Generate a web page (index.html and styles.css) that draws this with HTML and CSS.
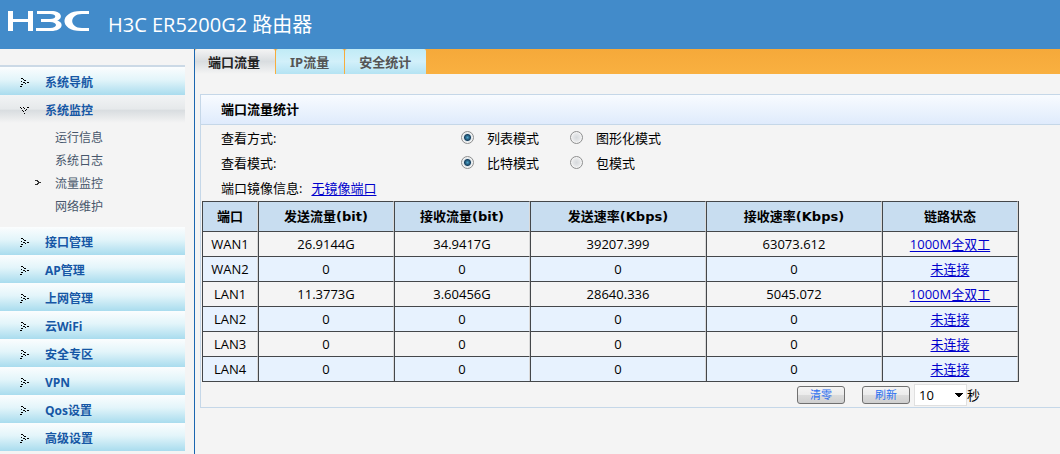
FILE: index.html
```html
<!DOCTYPE html>
<html lang="zh-CN">
<head>
    <meta charset="UTF-8">
    <meta name="viewport" content="width=device-width, initial-scale=1.0">
    <title>H3C ER5200G2 路由器</title>
    <link rel="stylesheet" href="styles.css">
</head>
<body>

    <!-- Menu arrows -->
    <svg width="0" height="0" class="sprites">
        <symbol id="arrow-right" viewBox="0 0 9 9">
            <path d="M1 0h2v1h-2zM3 1h1v1h-1zM1 3h1v1h-1zM4 2h2v1h-2zM3 4h2v1h-2zM7 4h2v1h-2zM5 5h1v1h-1zM1 6h2v1h-2zM0 8h2v1h-2z"/>
        </symbol>
        <symbol id="arrow-down" viewBox="0 0 9 9">
            <path d="M0 1h1v1h-1zM1 2h1v1h-1zM3 1h1v1h-1zM4 2h1v1h-1zM7 1h2v1h-2zM6 3h1v1h-1zM2 4h1v1h-1zM5 4h1v1h-1zM3 5h1v1h-1zM4 7h1v1h-1z"/>
        </symbol>
    </svg>

    <header class="header">
        <svg class="logo" viewBox="0 0 81 20" role="img" aria-label="H3C">
            <path d="M0 0H5V8H20V0H25V20H20V11H5V20H0Z"/>
            <path d="M29 0H43C55 0 55 8 49 9.5C56 11 56 20 43 20H28V17H42C50 17 50 11 42 11H33V8H42C49 8 49 3 42 3H29Z"/>
            <path d="M81 0V3H74C61 3 61 17 74 17H81V20H73C51 20 51 0 73 0Z"/>
        </svg>
        <h1>H3C ER5200G2 路由器</h1>
    </header>

    <div class="layout">
        <!-- Left menu -->
        <nav class="sidebar">
            <a class="menu-item" href="#"><svg class="arrow"><use href="#arrow-right"/></svg>系统导航</a>
            <a class="menu-item open" href="#"><svg class="arrow"><use href="#arrow-down"/></svg>系统监控</a>
            <div class="submenu">
                <a href="#">运行信息</a>
                <a href="#">系统日志</a>
                <a class="current" href="#"><svg class="marker" viewBox="0 0 6 6"><path d="M0 0h3v1h-3zM2 1h2v1h-2zM3 2h3v1h-3zM2 3h2v1h-2zM0 4h3v1h-3z"/></svg>流量监控</a>
                <a href="#">网络维护</a>
            </div>
            <a class="menu-item" href="#"><svg class="arrow"><use href="#arrow-right"/></svg>接口管理</a>
            <a class="menu-item" href="#"><svg class="arrow"><use href="#arrow-right"/></svg>AP管理</a>
            <a class="menu-item" href="#"><svg class="arrow"><use href="#arrow-right"/></svg>上网管理</a>
            <a class="menu-item" href="#"><svg class="arrow"><use href="#arrow-right"/></svg>云WiFi</a>
            <a class="menu-item" href="#"><svg class="arrow"><use href="#arrow-right"/></svg>安全专区</a>
            <a class="menu-item" href="#"><svg class="arrow"><use href="#arrow-right"/></svg>VPN</a>
            <a class="menu-item" href="#"><svg class="arrow"><use href="#arrow-right"/></svg>Qos设置</a>
            <a class="menu-item" href="#"><svg class="arrow"><use href="#arrow-right"/></svg>高级设置</a>
        </nav>

        <main class="content">
            <div class="tabs">
                <a class="tab active" href="#">端口流量</a>
                <a class="tab" href="#">IP流量</a>
                <a class="tab" href="#">安全统计</a>
            </div>

            <section class="panel">
                <h2>端口流量统计</h2>

                <div class="option-row">
                    <span class="option-name">查看方式:</span>
                    <label class="first"><input type="radio" name="view" checked>列表模式</label>
                    <label><input type="radio" name="view">图形化模式</label>
                </div>
                <div class="option-row">
                    <span class="option-name">查看模式:</span>
                    <label class="first"><input type="radio" name="unit" checked>比特模式</label>
                    <label><input type="radio" name="unit">包模式</label>
                </div>
                <div class="option-row">
                    <span>端口镜像信息:</span>
                    <a class="mirror" href="#">无镜像端口</a>
                </div>

                <table class="stats">
                    <colgroup>
                        <col class="col-port">
                        <col class="col-flow">
                        <col class="col-flow">
                        <col class="col-rate">
                        <col class="col-rate">
                        <col class="col-flow">
                    </colgroup>
                    <thead>
                        <tr>
                            <th>端口</th>
                            <th>发送流量(bit)</th>
                            <th>接收流量(bit)</th>
                            <th>发送速率(Kbps)</th>
                            <th>接收速率(Kbps)</th>
                            <th>链路状态</th>
                        </tr>
                    </thead>
                    <tbody>
                        <tr><td>WAN1</td><td>26.9144G</td><td>34.9417G</td><td>39207.399</td><td>63073.612</td><td><a href="#">1000M全双工</a></td></tr>
                        <tr><td>WAN2</td><td>0</td><td>0</td><td>0</td><td>0</td><td><a href="#">未连接</a></td></tr>
                        <tr><td>LAN1</td><td>11.3773G</td><td>3.60456G</td><td>28640.336</td><td>5045.072</td><td><a href="#">1000M全双工</a></td></tr>
                        <tr><td>LAN2</td><td>0</td><td>0</td><td>0</td><td>0</td><td><a href="#">未连接</a></td></tr>
                        <tr><td>LAN3</td><td>0</td><td>0</td><td>0</td><td>0</td><td><a href="#">未连接</a></td></tr>
                        <tr><td>LAN4</td><td>0</td><td>0</td><td>0</td><td>0</td><td><a href="#">未连接</a></td></tr>
                    </tbody>
                </table>

                <div class="actions">
                    <button type="button">清零</button>
                    <button type="button">刷新</button>
                    <div class="interval">
                        <select id="interval">
                            <option>10</option>
                            <option>30</option>
                            <option>60</option>
                        </select>
                        <label for="interval">秒</label>
                    </div>
                </div>
            </section>
        </main>
    </div>

</body>
</html>
```

FILE: styles.css
```css
* {
    box-sizing: border-box;
}

body {
    margin: 0;
    min-height: 100vh;
    display: flex;
    flex-direction: column;
    background: #f4f4f4;
    color: #000;
    font-family: "Open Sans", "Noto Sans CJK SC", sans-serif;
    font-size: 13px;
}

.sprites {
    position: absolute;
}

/* Header */
.header {
    display: flex;
    align-items: flex-start;
    gap: 19px;
    height: 49px;
    padding: 11px 8px 0;
    background: #428bca;
    color: #fff;
}

.header h1 {
    margin: 0;
    font-size: 20px;
    line-height: 28px;
    font-weight: normal;
}

.logo {
    width: 81px;
    height: 20px;
    fill: #fff;
}

.layout {
    flex: 1;
    display: flex;
}

/* Left menu */
.sidebar {
    width: 195px;
    flex-shrink: 0;
    padding: 16px 9px 0 0;
    border-right: 1px solid #1a66b0;
}

.sidebar a {
    display: flex;
    align-items: center;
    text-decoration: none;
}

.menu-item {
    height: 28px;
    padding: 2px 0 0 20px;
    gap: 16px;
    background: linear-gradient(#fbfdfe, #e3f5fa 45%, #a9dcee);
    color: #1657a5;
    font-size: 12px;
    font-weight: bold;
}

.menu-item:first-child {
    height: 30px;
    border-top: 2px solid #cbd9e6;
}

.menu-item.open {
    background: linear-gradient(#f2f4f5, #e6e9eb 50%, #d9dde0 55%, #f4f4f4);
}

.arrow {
    width: 9px;
    height: 9px;
}

.submenu {
    padding: 2px 0 10px;
}

.submenu a {
    height: 23px;
    padding-left: 55px;
    color: #47566b;
    font-size: 12px;
}

.submenu .current {
    padding-left: 35px;
    gap: 14px;
}

.marker {
    width: 6px;
    height: 6px;
    fill: #333;
}

/* Tabs */
.content {
    flex: 1;
    min-width: 0;
}

.tabs {
    display: flex;
    gap: 1px;
    height: 25px;
    background: linear-gradient(#f5a93a, #f9b040);
}

.tab {
    padding: 0 15px 0 14px;
    border-radius: 2px 2px 0 0;
    background: linear-gradient(#c0ebf6, #d2f0fa 50%, #b4e3f3);
    color: #555;
    font-family: "Noto Sans", "Noto Sans CJK SC", sans-serif;
    font-weight: bold;
    line-height: 26px;
    text-decoration: none;
}

.tab.active {
    padding-left: 13px;
    background: linear-gradient(#f4f4f4, #d9dde0 50%, #f4f4f4);
    color: #222;
}

/* Panel */
.panel {
    margin: 20px 0 0 5px;
    border: 1px solid #c5d7e8;
    border-right: 0;
}

.panel h2 {
    margin: 0;
    padding-left: 20px;
    border-bottom: 1px solid #c5d7e8;
    background: linear-gradient(#f8fbff, #dfebfc);
    font-size: 13px;
    line-height: 29px;
}

.option-row {
    display: flex;
    align-items: center;
    height: 25px;
    padding-left: 20px;
}

.option-row label {
    display: flex;
    align-items: center;
    gap: 13px;
}

.option-row .first {
    width: 109px;
}

.option-name {
    width: 240px;
}

.mirror {
    margin-left: 9px;
}

a {
    color: #0000cc;
    text-underline-offset: 2px;
}

input[type="radio"] {
    appearance: none;
    width: 13px;
    height: 13px;
    margin: 0;
    border: 1px solid #8e8f8f;
    border-radius: 50%;
    background: radial-gradient(#d6d9dc, #f8f8f8);
    box-shadow: inset 0 0 0 1px #f4f4f4;
}

input[type="radio"]:checked {
    background: radial-gradient(circle at 50% 50%, #4fa6cc 0, #16405f 3px, #dfe6ea 4px);
}

/* Port statistics */
.stats {
    width: 100%;
    max-width: 817px;
    margin: 1px 0 0 1px;
    table-layout: fixed;
    border-spacing: 0;
    border-right: 1px solid #44474a;
    border-bottom: 1px solid #44474a;
    text-align: center;
}

.col-port {
    width: 56px;
}

.col-flow {
    width: 136px;
}

.col-rate {
    width: 176px;
}

.stats th,
.stats td {
    height: 25px;
    padding: 0;
    border: 1px solid #44474a;
    border-right-color: #d9d9d9;
    border-bottom: 0;
    line-height: 20px;
}

.stats th {
    height: 30px;
    background: #c8ddf0;
    font-family: "DejaVu Sans", "Noto Sans CJK SC", sans-serif;
}

.stats tbody tr:nth-child(even) {
    background: #e7f2fe;
}

/* Buttons under the table */
.actions {
    display: flex;
    justify-content: flex-end;
    align-items: center;
    gap: 17px;
    max-width: 779px;
    height: 25px;
}

.actions button {
    width: 48px;
    height: 18px;
    padding: 0;
    border: 1px solid #707070;
    border-radius: 3px;
    background: linear-gradient(#f4f4f4, #ebebeb 50%, #dcdcdc 50%, #cfcfcf);
    color: #2a6ef0;
    font-family: inherit;
    font-size: 11px;
    line-height: 16px;
}

.interval {
    display: flex;
    align-items: center;
    margin-left: -13px;
}

.actions select {
    appearance: none;
    width: 53px;
    height: 22px;
    padding: 0 4px;
    border: 1px solid #e0e0e0;
    border-radius: 0;
    background: conic-gradient(from -45deg at 50% 100%, #000 90deg, transparent 90deg) 40px 8px / 8px 4px no-repeat, #fff;
    color: #000;
    font-family: inherit;
    font-size: 13px;
}
```
